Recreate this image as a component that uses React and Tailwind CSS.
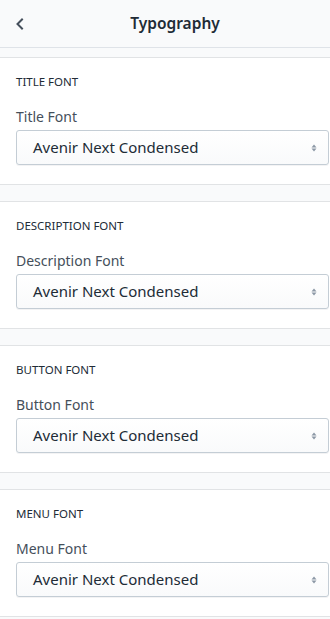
import React from 'react'

const sections = [
  { heading: 'Title Font', label: 'Title Font' },
  { heading: 'Description Font', label: 'Description Font' },
  { heading: 'Button Font', label: 'Button Font' },
  { heading: 'Menu Font', label: 'Menu Font' },
]

function UpDown() {
  return (
    <svg width="8" height="12" viewBox="0 0 8 12" className="text-[#8c98a6]">
      <path d="M4 2.5 L6.5 5.5 H1.5 Z" fill="currentColor" />
      <path d="M4 9.5 L6.5 6.5 H1.5 Z" fill="currentColor" />
    </svg>
  )
}

export default function App() {
  return (
    <div className="min-h-[619px] bg-[#f9fafb] text-[#212b36]" style={{ fontFamily: '"Noto Sans", "Open Sans", sans-serif' }}>
      {/* HEADER */}
      <div className="h-[48px] bg-[#f9fafb] border-b border-[#dfe3e8] flex items-center relative">
        <button className="w-[40px] h-[44px] flex items-center justify-center text-[#454f5b]">
          <svg width="12" height="12" viewBox="0 0 12 12">
            <path d="M8 1.5 L3.5 6 L8 10.5" stroke="currentColor" strokeWidth="2" fill="none" strokeLinecap="square" />
          </svg>
        </button>
        <h1 className="absolute left-[20px] right-0 text-center text-[15.5px] font-semibold text-[#212b36] pointer-events-none">Typography</h1>
      </div>

      <div className="flex flex-col gap-[16px] pt-[9px]">
        {sections.map(s => (
          <div key={s.heading} className="bg-white border-y border-[#e1e3e5] pt-[16px] pb-[19px] pl-[16px]">
            <h2 className="text-[11.5px] leading-[16px] font-normal uppercase text-[#212b36]">{s.heading}</h2>
            <p className="mt-[17px] text-[14px] leading-[20px] text-[#454f5b]">{s.label}</p>
            <div className="mt-[3px] h-[35px] w-[313px] flex items-center justify-between rounded-[3px] border border-[#c4cdd5] bg-gradient-to-b from-white to-[#f9fafb] shadow-[0_1px_0_rgba(22,29,37,0.05)] pl-[16px] pr-[10px]">
              <span className="text-[15px] text-[#212b36]">Avenir Next Condensed</span>
              <UpDown />
            </div>
          </div>
        ))}
      </div>
    </div>
  )
}
